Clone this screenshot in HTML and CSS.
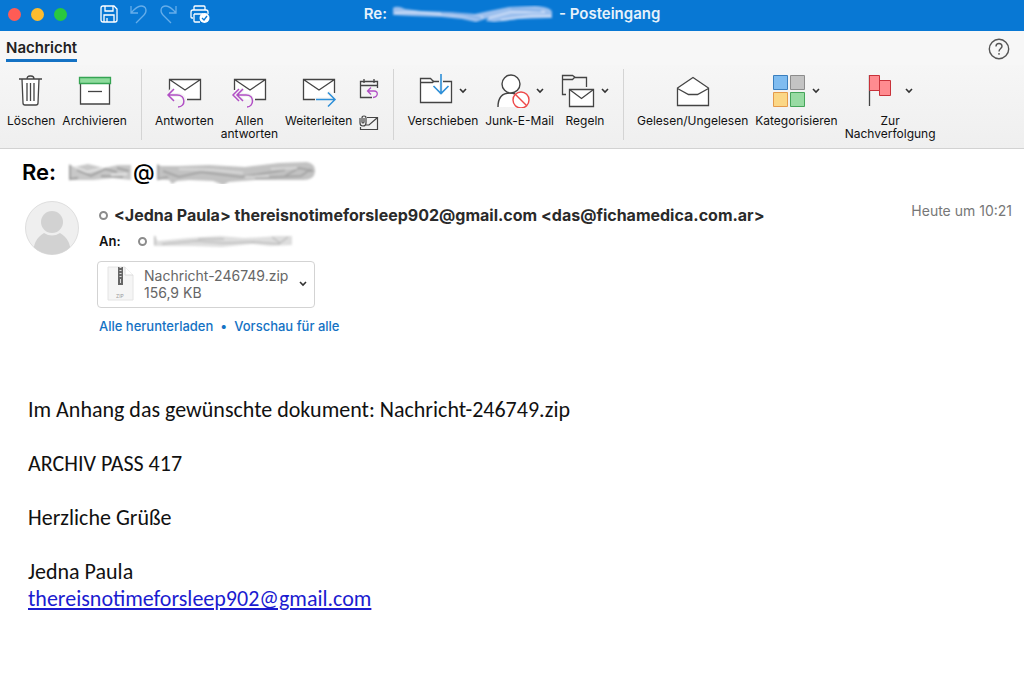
FILE: index.html
```html
<!DOCTYPE html>
<html lang="de">
<head>
<meta charset="utf-8">
<title>Posteingang</title>
<link rel="stylesheet" href="styles.css">
</head>
<body>
<svg class="defs" aria-hidden="true">
  <defs>
    <filter id="soft" x="-10%" y="-30%" width="120%" height="160%"><feGaussianBlur stdDeviation="1"/></filter>
    <symbol id="chev" viewBox="0 0 8 6"><path d="M1 1l3 3 3-3" fill="none" stroke="#333" stroke-width="1.6"/></symbol>
  </defs>
</svg>

<header class="titlebar">
  <div class="tools">
    <span class="light red"></span>
    <span class="light yellow"></span>
    <span class="light green"></span>
    <button class="tool save" aria-label="Sichern">
      <svg width="20" height="20" viewBox="0 0 20 20" fill="none" stroke="#fff" stroke-width="1.3"><path d="M4 2h11l3 3v11q0 2-2 2H4q-2 0-2-2V4q0-2 2-2zM6 2v5h8V2M5 18v-7h10v7M8 14v4"/></svg>
    </button>
    <button class="tool" aria-label="Widerrufen">
      <svg width="20" height="20" viewBox="0 0 20 20" fill="none" stroke="#65adea" stroke-width="1.3"><path d="M2 2v7h7M2 9q6-7 10-7c6 0 6 6 3 9l-8 8"/></svg>
    </button>
    <button class="tool" aria-label="Wiederholen">
      <svg width="20" height="20" viewBox="0 0 20 20" fill="none" stroke="#65adea" stroke-width="1.3"><path d="M17 2v7h-7M17 9q-6-7-10-7C1 2 1 8 4 11l8 8"/></svg>
    </button>
    <button class="tool" aria-label="Drucken">
      <svg width="22" height="20" viewBox="0 0 22 20" fill="none" stroke="#fff" stroke-width="1.3"><path d="M5 6V3q0-1 1-1h9q1 0 1 1v3M4 14H3q-1 0-1-1V8q0-2 2-2h13q2 0 2 2v2M5 10h9M5 10v7q0 1 1 1h5"/><circle cx="15.500" cy="14" r="5" fill="#fff" stroke="none"/><path d="M13 14l2 2 3-4" stroke="#0878d4"/></svg>
    </button>
  </div>
  <h1 class="window-title">Re:
    <svg width="164" height="18" viewBox="0 0 164 18" role="img" aria-label="unkenntlich"><g filter="url(#soft)"><path d="M2 3q4-3 12 1l16 2 28 1 26 2 14-3 20-4 26-1q16 1 17 6v6l-34 1-24 3-8-1 2-3-12 4-14-3-20-2-30-1-19-1z" fill="#9cc0ee"/><path d="M4 8l20-1 38 3 30 2M98 13l22-6 34 0M110 15l30-4 20 0" fill="none" stroke="#c9dcf7" stroke-width="2"/><path d="M50 8q24 1 40 5M120 4l30 2" fill="none" stroke="#83b1e8" stroke-width="2"/></g></svg>
    - Posteingang</h1>
</header>

<nav class="tabs">
  <button class="tab">Nachricht</button>
  <button class="help" aria-label="Hilfe">
    <svg width="22" height="22" viewBox="0 0 22 22" fill="none" stroke="#555" stroke-width="1.400"><circle cx="11" cy="11" r="9.700"/><path d="M8 8.500q0-3 3-3t3 2.800c0 2.200-3 2.500-3 5.200M11 15v1.700"/></svg>
  </button>
</nav>

<section class="ribbon" aria-label="Menüband">
  <div class="group">
    <button class="cmd">
      <span class="icon"><svg width="26" height="34" viewBox="0 0 26 34" fill="none" stroke="#444" stroke-width="1.300"><path d="M4 5l1 24q0 2 2 2h11q2 0 2-2l1-24" fill="#fff"/><path d="M1 5h23M9 5q0-3 3-3h1q3 0 3 3M9 9v18M12.500 9v18M16 9v18"/></svg></span>
      <span>Löschen</span>
    </button>
    <button class="cmd">
      <span class="icon"><svg width="34" height="34" viewBox="0 0 34 34" fill="none" stroke="#444" stroke-width="1.300"><path d="M2.500 9h29v21h-29z" fill="#fff"/><path d="M1.500 3.500h31v6h-31z" fill="#8edb9c" stroke="#36a453"/><path d="M10 17.500h14"/></svg></span>
      <span>Archivieren</span>
    </button>
  </div>
  <div class="group">
    <button class="cmd">
      <span class="icon"><svg width="36" height="34" viewBox="0 0 36 34" fill="none" stroke="#444" stroke-width="1.300"><path d="M3.500 5.500h31v20h-31z" fill="#fff" stroke="none"/><path d="M3.500 18V5.500h31v20H21M3.500 5.500L19 16l15.500-10.500"/><path d="M1 21h11c9 0 7 12 0 12M7 15l-6 6 6 6" stroke="#f3f3f3" stroke-width="4"/><path d="M2 21h9c9 0 9 12 1 12M8 15l-6 6 6 6" stroke="#b14fc5" stroke-width="1.500"/></svg></span>
      <span>Antworten</span>
    </button>
    <button class="cmd">
      <span class="icon"><svg width="36" height="34" viewBox="0 0 36 34" fill="none" stroke="#444" stroke-width="1.300"><path d="M3.500 5.500h31v20h-31z" fill="#fff" stroke="none"/><path d="M3.500 16V5.500h31v20H24M3.500 5.500L19 16l15.500-10.500"/><path d="M6 21h9c9 0 7 12 0 12M12 15l-6 6 6 6" stroke="#f3f3f3" stroke-width="4"/><path d="M6 21h9c9 0 8 12 1 12M12 15l-6 6 6 6M8 15l-6 6 6 6" stroke="#b14fc5" stroke-width="1.500"/></svg></span>
      <span>Allen<br>antworten</span>
    </button>
    <button class="cmd">
      <span class="icon"><svg width="36" height="34" viewBox="0 0 36 34" fill="none" stroke="#444" stroke-width="1.300"><path d="M2.500 5.500h31v20h-31z" fill="#fff" stroke="none"/><path d="M14 25.500H2.500v-20h31V19M2.500 5.500L18 16 33.500 5.500"/><path d="M14 25.500h20M27 18l7.500 7.500L27 33" stroke="#f3f3f3" stroke-width="4"/><path d="M15 25.500h19M27 18.500l7 7-7 7" stroke="#2d8fd8" stroke-width="1.500"/></svg></span>
      <span>Weiterleiten</span>
    </button>
    <div class="stack">
      <button class="small" aria-label="Besprechung">
        <svg width="20" height="20" viewBox="0 0 20 20" fill="none" stroke="#444" stroke-width="1.300"><path d="M13 18.500H1.500v-16h17V9M1.500 6.500h17M5 0v4M15 0v4"/><path d="M9 12h6c5 0 4 6-1 6.500M12 8.500L8.500 12l3.500 3.500" stroke="#b14fc5"/></svg>
      </button>
      <button class="small" aria-label="Anlage">
        <svg width="20" height="16" viewBox="0 0 20 16" fill="none" stroke="#444" stroke-width="1.200"><path d="M8 2.500h10.500v12h-17V12M18 3l-8 7H7"/><path d="M1 3v5q0 3 3 3t3-3V3q0-2-2-2T3 3v4q0 1 1 1t1-1V3"/></svg>
      </button>
    </div>
  </div>
  <div class="group">
    <button class="cmd">
      <span class="icon"><svg width="34" height="34" viewBox="0 0 34 34" fill="none" stroke="#444" stroke-width="1.300"><path d="M1.500 4.500h10l3 3h18v21h-31z" fill="#fff"/><path d="M1.500 8.500h12l1.500-1.500"/><path d="M22 4v16" stroke="#f3f3f3" stroke-width="4"/><path d="M22 0v19M14.500 12l7.500 7.500 7.500-7.500" stroke="#2d8fd8" stroke-width="1.600"/></svg><svg class="chev"><use href="#chev"/></svg></span>
      <span>Verschieben</span>
    </button>
    <button class="cmd">
      <span class="icon"><svg width="34" height="34" viewBox="0 0 34 34" fill="none" stroke="#444" stroke-width="1.400"><path d="M2 33c0-9 4-14 12-14 5 0 8 2 9 4l-4 10z" fill="#fff" stroke="none"/><path d="M2 33c0-9 4-14 12-14q3 0 5 1"/><circle cx="15" cy="10" r="9" fill="#fff"/><circle cx="25" cy="26" r="8" fill="#fff" stroke="#ee4848"/><path d="M19.500 20.500l11 11" stroke="#ee4848"/></svg><svg class="chev"><use href="#chev"/></svg></span>
      <span>Junk-E-Mail</span>
    </button>
    <button class="cmd">
      <span class="icon"><svg width="34" height="34" viewBox="0 0 34 34" fill="none" stroke="#444" stroke-width="1.300"><path d="M5 20.500H1.500v-19h10l3 2h11V13M1.500 5.500h10l2-2"/><path d="M8.500 15.500h24v17h-24z" fill="#fff"/><path d="M8.500 15.500l12 9 12-9"/></svg><svg class="chev"><use href="#chev"/></svg></span>
      <span>Regeln</span>
    </button>
  </div>
  <div class="group">
    <button class="cmd">
      <span class="icon"><svg width="34" height="34" viewBox="0 0 34 34" fill="none" stroke="#444" stroke-width="1.300"><path d="M1.500 14L17 3.500 32.500 14v17.500h-31z" fill="#fff"/><path d="M1.500 14.500l11 6h9l11-6"/></svg></span>
      <span>Gelesen/Ungelesen</span>
    </button>
    <button class="cmd">
      <span class="icon"><svg width="34" height="34" viewBox="0 0 34 34"><path d="M1.500 1.500h14v14h-14z" fill="#7fbcf0" stroke="#3a7fbe"/><path d="M18.500 1.500h14v14h-14z" fill="#c3c3c3" stroke="#8c8c8c"/><path d="M1.500 18.500h14v14h-14z" fill="#fbd786" stroke="#e49a4c"/><path d="M18.500 18.500h14v14h-14z" fill="#98dba3" stroke="#45a55a"/></svg><svg class="chev"><use href="#chev"/></svg></span>
      <span>Kategorisieren</span>
    </button>
    <button class="cmd">
      <span class="icon"><svg width="32" height="34" viewBox="0 0 32 34"><path d="M2.500 1v31" stroke="#444" stroke-width="1.300"/><path d="M12.500 6.500h11v15h-11z" fill="#ff8b90" stroke="#c8323a"/><path d="M2.500 1.500h10v15h-10z" fill="#ff8b90" stroke="#c8323a"/></svg><svg class="chev"><use href="#chev"/></svg></span>
      <span>Zur<br>Nachverfolgung</span>
    </button>
  </div>
</section>

<main class="mail">
  <h2 class="subject">Re:
    <span class="masked">
      <svg width="66" height="24" viewBox="0 0 66 24" role="img" aria-label="unkenntlich"><g filter="url(#soft)"><path d="M2 4l5 3 14-3 16 4 14-3 13 0v15l-18-2-20 2-24 0z" fill="#c8c8c8"/><path d="M3 5v14l8-1M10 10l14 6 14-7 12 3M50 8l12 3M34 16l22 1" fill="none" stroke="#a0a0a0" stroke-width="2"/><path d="M8 7l12 5 16-4M44 15l16-1" fill="none" stroke="#e5e5e5" stroke-width="2"/></g></svg>@<svg width="162" height="24" viewBox="0 0 162 24" role="img" aria-label="unkenntlich"><g filter="url(#soft)"><path d="M2 4l4 2 18 0 30-1 36 2 34-4 28-1q9 2 8 10t-12 8l-48 0-26 2-6 3-10-4-24-1-12 1-5 3-3-4-12-1z" fill="#c2c2c2"/><path d="M3 5v14l10-2M8 11l16 6 22-5 40 5 44-7M100 18l46-2 10-7M130 16l14-8 14 3" fill="none" stroke="#a4a4a4" stroke-width="2"/><path d="M24 9l34 1 30 3M116 9l26-1M90 17l24-1" fill="none" stroke="#d9d9d9" stroke-width="2"/></g></svg>
    </span>
  </h2>

  <div class="head">
    <svg class="avatar" width="54" height="54" viewBox="0 0 54 54" aria-hidden="true"><defs><clipPath id="face"><circle cx="27" cy="27" r="26.500"/></clipPath></defs><circle cx="27" cy="27" r="26.500" fill="#efefef" stroke="#dedede"/><g clip-path="url(#face)" fill="#d2d2d2"><circle cx="27" cy="21" r="11"/><path d="M8 54q0-16 11-22 8 5 16 0 11 6 11 22z"/></g></svg>
    <div class="details">
      <div class="from"><span class="dot"></span><strong>&lt;Jedna Paula&gt; thereisnotimeforsleep902@gmail.com &lt;das@fichamedica.com.ar&gt;</strong></div>
      <div class="to"><b>An:</b><span class="dot"></span>
        <svg width="144" height="16" viewBox="0 0 144 16" role="img" aria-label="unkenntlich"><g filter="url(#soft)"><path d="M2 3l4 5 30-3 32-2 24 2 20-1 12-1 16 0v9l-22 1-18-2-30 3-30-1-38 0z" fill="#dedede"/><path d="M3 3v9M10 11l34-3 28 2 30-1 26 2M120 4l8 6 8-6M46 6h26" fill="none" stroke="#bdbdbd" stroke-width="1.500"/></g></svg>
      </div>
      <button class="attachment">
        <svg width="28" height="36" viewBox="0 0 28 36" aria-hidden="true"><path d="M1 1h17l8 8v25H1z" fill="#f5f5f5" stroke="#e4e4e4"/><path d="M18 1v8h8" fill="#fff" stroke="#dcdcdc"/><path d="M11 1h5v18h-5z" fill="#666"/><path d="M13.500 1v11" stroke="#ddd" stroke-width="2" stroke-dasharray="1 2"/><path d="M13 13h1v4h-1z" fill="#ddd"/><text class="ziptext" x="9" y="32">ZIP</text></svg>
        <span class="file"><span>Nachricht-246749.zip</span><span>156,9 KB</span></span>
        <svg class="chev"><use href="#chev"/></svg>
      </button>
      <div class="links"><a href="#alle">Alle herunterladen</a><span>•</span><a href="#vorschau">Vorschau für alle</a></div>
    </div>
    <time class="date">Heute um 10:21</time>
  </div>

  <article class="body">
    <p>Im Anhang das gewünschte dokument: Nachricht-246749.zip</p>
    <p>ARCHIV PASS 417</p>
    <p>Herzliche Grüße</p>
    <p>Jedna Paula<br><a href="mailto:thereisnotimeforsleep902@gmail.com">thereisnotimeforsleep902@gmail.com</a></p>
  </article>
</main>
</body>
</html>
```

FILE: styles.css
```css
* { box-sizing: border-box; }
body {
  margin: 0;
  background: #fff;
  color: #111;
  font: 12px/14px Inter, "Liberation Sans", sans-serif;
}
button {
  margin: 0;
  padding: 0;
  border: 0;
  background: none;
  color: inherit;
  font: inherit;
}
svg { display: block; flex: none; }
.defs { position: absolute; width: 0; height: 0; }
.chev { width: 8px; height: 6px; }

.titlebar {
  display: grid;
  grid-template-columns: 1fr auto 1fr;
  align-items: center;
  min-height: 31px;
  padding-bottom: 3px;
  background: #0878d4;
}
.tools { display: flex; align-items: center; gap: 10px; padding-left: 8px; }
.light { width: 13px; height: 13px; border-radius: 50%; }
.red { background: #ff5c55; }
.yellow { background: #fcbc2f; }
.green { background: #29c83f; }
.save { margin-left: 22px; }
.window-title {
  display: flex;
  align-items: center;
  gap: 4px;
  margin: 0;
  color: #e6f1fb;
  font-size: 15px;
  line-height: 18px;
  font-weight: 600;
}

.tabs {
  display: flex;
  justify-content: space-between;
  align-items: flex-start;
  padding: 6px 14px 3px 6px;
  background: #f7f7f7;
}
.tab {
  padding: 2px 0;
  border-bottom: 3px solid #1472c4;
  color: #222;
  font-size: 15px;
  line-height: 18px;
  font-weight: 600;
}
.help { padding-top: 1px; }

.ribbon {
  display: flex;
  padding: 4px 0 8px;
  border-bottom: 1px solid #d2d2d2;
  background: linear-gradient(#f6f6f6, #efefef);
}
.group {
  display: flex;
  align-items: flex-start;
  gap: 7px;
  padding: 5px 14px 0 13px;
  border-right: 1px solid #d4d4d4;
}
.group:first-child { padding-left: 7px; }
.group:last-child { border-right: 0; }
.cmd {
  display: flex;
  flex-direction: column;
  align-items: center;
  gap: 6px;
  line-height: 13px;
  white-space: nowrap;
}
.icon { display: flex; align-items: center; gap: 6px; }
.stack { display: flex; flex-direction: column; gap: 16px; padding: 5px 0 0; }

.mail { padding: 8px 12px 24px 22px; }
.subject {
  display: flex;
  align-items: center;
  gap: 11px;
  margin: 0;
  color: #000;
  font-size: 22px;
  line-height: 30px;
  font-weight: 600;
}
.masked { display: flex; align-items: center; font-weight: 500; }
.head { display: flex; align-items: flex-start; padding-top: 14px; }
.avatar { margin: 0 20px 0 3px; }
.details { flex: 1; padding-top: 4px; }
.dot {
  flex: none;
  width: 9px;
  height: 9px;
  border: 2px solid #8c8c8c;
  border-radius: 50%;
}
.from {
  display: flex;
  align-items: center;
  gap: 6px;
  color: #2a2a2a;
  font-size: 16px;
  line-height: 20px;
}
.from strong { font-weight: 700; }
.to { display: flex; align-items: center; gap: 5px; padding-top: 8px; }
.to b { margin-right: 12px; font-size: 13px; line-height: 16px; font-weight: 600; }
.attachment {
  display: flex;
  align-items: center;
  width: 218px;
  margin: 12px 0 0 -2px;
  padding: 4px 7px 5px 9px;
  border: 1px solid #d3d3d3;
  border-radius: 4px;
  color: #666;
  font-size: 14px;
  line-height: 17px;
  text-align: left;
}
.file { display: flex; flex: 1; flex-direction: column; padding-left: 9px; white-space: nowrap; }
.ziptext { fill: #999; font-size: 5px; }
.links {
  display: flex;
  gap: 7px;
  padding-top: 9px;
  color: #1472c4;
  font-size: 13px;
  line-height: 18px;
  font-weight: 500;
}
.links a { color: inherit; text-decoration: none; }
.date { color: #777; font-size: 14px; line-height: 20px; }

.body {
  padding: 61px 0 0 6px;
  color: #111;
  font: 22px/27px Carlito, Lato, sans-serif;
}
.body p { margin: 0 0 27px; }
.body a { color: #1b1bd0; }
```
